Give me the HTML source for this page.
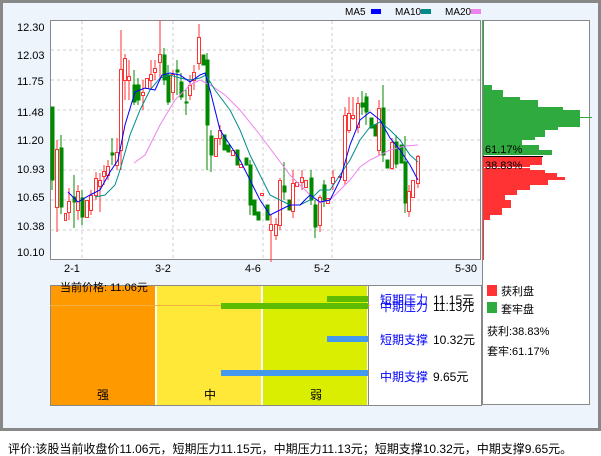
<!DOCTYPE html>
<html><head><meta charset="utf-8"><style>
html,body{margin:0;padding:0;background:#fff;width:601px;height:456px;overflow:hidden}
svg text{font-family:"Liberation Sans","Noto Sans CJK SC",sans-serif}
</style></head><body>
<svg width="601" height="456" xmlns="http://www.w3.org/2000/svg" font-size="11">
<rect x="1.5" y="1.5" width="598" height="428" fill="#EEF4FC" stroke="#888" stroke-width="3"/>
<!-- legend -->
<text x="345" y="15" font-size="10">MA5</text><rect x="371" y="9" width="10" height="5" fill="#00f"/>
<text x="395" y="15" font-size="10">MA10</text><rect x="421" y="9" width="10" height="5" fill="#008b8b"/>
<text x="445" y="15" font-size="10">MA20</text><rect x="471" y="9" width="10" height="5" fill="#ee82ee"/>
<!-- plot -->
<rect x="50.5" y="20.5" width="430" height="239" fill="#fff" stroke="#888"/>
<g stroke="#ccc" stroke-dasharray="3,3">
<line x1="51" y1="50" x2="480" y2="50"/><line x1="51" y1="80" x2="480" y2="80"/><line x1="51" y1="110" x2="480" y2="110"/><line x1="51" y1="140" x2="480" y2="140"/><line x1="51" y1="170" x2="480" y2="170"/><line x1="51" y1="200" x2="480" y2="200"/><line x1="51" y1="230" x2="480" y2="230"/>
<line x1="82" y1="21" x2="82" y2="260"/><line x1="173" y1="21" x2="173" y2="260"/><line x1="263" y1="21" x2="263" y2="260"/><line x1="332" y1="21" x2="332" y2="260"/>
</g>
<g font-size="11">
<text x="17" y="31">12.30</text><text x="17" y="59">12.03</text><text x="17" y="85">11.75</text><text x="17" y="116">11.48</text><text x="17" y="144">11.20</text><text x="17" y="173">10.93</text><text x="17" y="201">10.65</text><text x="17" y="230">10.38</text><text x="17" y="256">10.10</text>
<text x="64" y="272">2-1</text><text x="155" y="272">3-2</text><text x="245" y="272">4-6</text><text x="314" y="272">5-2</text><text x="455" y="272">5-30</text>
</g>
<g id="c">
<!-- candles: green filled -->
<g fill="#008800" stroke="#008800">
<line x1="52" y1="107" x2="52" y2="190"/><rect x="51" y="107" width="3" height="73"/>
<line x1="61" y1="135" x2="61" y2="214"/><rect x="60" y="148" width="3" height="59"/>
<line x1="74" y1="175" x2="74" y2="228"/><rect x="73" y="197" width="3" height="5"/>
<line x1="82" y1="190" x2="82" y2="225"/><rect x="81" y="198" width="3" height="19"/>
<line x1="112" y1="138" x2="112" y2="165"/><rect x="111" y="153" width="3" height="2"/>
<line x1="134" y1="70" x2="134" y2="105"/><rect x="133" y="85" width="3" height="17"/>
<line x1="138" y1="78" x2="138" y2="105"/><rect x="137" y="85" width="3" height="15"/>
<line x1="164" y1="48" x2="164" y2="85"/><rect x="163" y="55" width="3" height="25"/>
<line x1="168" y1="65" x2="168" y2="105"/><rect x="167" y="75" width="3" height="27"/>
<line x1="177" y1="60" x2="177" y2="95"/><rect x="176" y="70" width="3" height="2"/>
<line x1="181" y1="73" x2="181" y2="100"/><rect x="180" y="82" width="3" height="15"/>
<line x1="186" y1="90" x2="186" y2="115"/><rect x="185" y="102" width="3" height="1"/>
<rect x="202" y="55" width="3" height="10"/>
<line x1="207" y1="53" x2="207" y2="170"/><rect x="206" y="60" width="3" height="65"/>
<line x1="211" y1="130" x2="211" y2="172"/><rect x="210" y="136" width="3" height="19"/>
<rect x="223" y="135" width="3" height="15"/><rect x="227" y="145" width="3" height="7"/>
<rect x="236" y="150" width="3" height="15"/><rect x="245" y="158" width="3" height="7"/>
<line x1="250" y1="160" x2="250" y2="215"/><rect x="249" y="165" width="3" height="40"/>
<rect x="253" y="200" width="3" height="15"/><rect x="257" y="212" width="3" height="8"/>
<rect x="266" y="205" width="3" height="15"/>
<line x1="284" y1="162" x2="284" y2="200"/><rect x="283" y="186" width="3" height="6"/>
<rect x="288" y="200" width="3" height="10"/>
<line x1="311" y1="170" x2="311" y2="205"/><rect x="310" y="178" width="3" height="22"/>
<line x1="315" y1="200" x2="315" y2="238"/><rect x="314" y="205" width="3" height="22"/>
<line x1="324" y1="180" x2="324" y2="207"/><rect x="323" y="185" width="3" height="15"/>
<line x1="362" y1="91" x2="362" y2="115"/><rect x="361" y="103" width="3" height="4"/>
<line x1="366" y1="93" x2="366" y2="125"/><rect x="365" y="97" width="3" height="15"/>
<rect x="370" y="118" width="3" height="10"/><rect x="374" y="125" width="3" height="11"/>
<line x1="383" y1="85" x2="383" y2="162"/><rect x="382" y="108" width="3" height="47"/>
<rect x="386" y="160" width="3" height="8"/>
<line x1="396" y1="135" x2="396" y2="168"/><rect x="395" y="142" width="3" height="22"/>
<rect x="400" y="145" width="3" height="18"/>
<line x1="405" y1="136" x2="405" y2="213"/><rect x="404" y="162" width="3" height="41"/>
</g>
<!-- red hollow -->
<g fill="none" stroke="#ff3333">
<line x1="57" y1="140" x2="57" y2="232"/><rect x="55.5" y="149.5" width="3" height="58" fill="#fff"/>
<rect x="64.5" y="213.5" width="2" height="7"/>
<line x1="69" y1="188" x2="69" y2="220"/><rect x="67.5" y="201.5" width="3" height="11" fill="#fff"/>
<line x1="78" y1="185" x2="78" y2="220"/><rect x="76.5" y="191.5" width="3" height="19" fill="#fff"/>
<rect x="85.5" y="200.5" width="3" height="17"/>
<line x1="91" y1="190" x2="91" y2="215"/><rect x="89.5" y="195.5" width="3" height="15" fill="#fff"/>
<line x1="96" y1="172" x2="96" y2="200"/><rect x="94.5" y="178.5" width="3" height="17" fill="#fff"/>
<line x1="100" y1="173" x2="100" y2="212"/><rect x="98.5" y="180.5" width="3" height="6" fill="#fff"/>
<line x1="104" y1="165" x2="104" y2="185"/><rect x="102.5" y="171.5" width="3" height="5" fill="#fff"/>
<line x1="108" y1="160" x2="108" y2="180"/><rect x="106.5" y="166.5" width="3" height="9" fill="#fff"/>
<line x1="117" y1="138" x2="117" y2="170"/><rect x="115.5" y="152.5" width="3" height="13" fill="#fff"/>
<line x1="121" y1="30" x2="121" y2="170"/><rect x="119.5" y="69.5" width="3" height="81" fill="#fff"/>
<line x1="125" y1="54" x2="125" y2="100"/><rect x="123.5" y="58.5" width="3" height="22" fill="#fff"/>
<line x1="129" y1="60" x2="129" y2="100"/><rect x="127.5" y="76.5" width="3" height="4" fill="#fff"/>
<line x1="143" y1="80" x2="143" y2="110"/><rect x="141.5" y="92.5" width="3" height="3" fill="#fff"/>
<rect x="145.5" y="78.5" width="3" height="10"/>
<line x1="151" y1="60" x2="151" y2="90"/><rect x="149.5" y="74.5" width="3" height="6" fill="#fff"/>
<line x1="155" y1="60" x2="155" y2="80"/><rect x="153.5" y="68.5" width="3" height="4" fill="#fff"/>
<line x1="160" y1="20" x2="160" y2="80"/><rect x="158.5" y="54.5" width="3" height="8" fill="#fff"/>
<line x1="173" y1="70" x2="173" y2="100"/><rect x="171.5" y="74.5" width="3" height="18" fill="#fff"/>
<line x1="190" y1="75" x2="190" y2="100"/><rect x="188.5" y="85.5" width="3" height="10" fill="#fff"/>
<line x1="194" y1="65" x2="194" y2="90"/><rect x="192.5" y="72.5" width="3" height="8" fill="#fff"/>
<line x1="199" y1="24" x2="199" y2="70"/><rect x="197.5" y="37.5" width="3" height="26" fill="#fff"/>
<rect x="214.5" y="138.5" width="3" height="18"/>
<line x1="220" y1="125" x2="220" y2="145"/><rect x="218.5" y="130.5" width="3" height="8" fill="#fff"/>
<rect x="231.5" y="150.5" width="3" height="5"/>
<rect x="239.5" y="164.5" width="3" height="3"/>
<rect x="260.5" y="193.5" width="3" height="2"/>
<line x1="271" y1="215" x2="271" y2="262"/><rect x="269.5" y="224.5" width="3" height="6" fill="#fff"/>
<line x1="276" y1="218" x2="276" y2="240"/><rect x="274.5" y="224.5" width="3" height="11" fill="#fff"/>
<line x1="280" y1="178" x2="280" y2="230"/><rect x="278.5" y="180.5" width="3" height="45" fill="#fff"/>
<line x1="293" y1="170" x2="293" y2="218"/><rect x="291.5" y="183.5" width="3" height="28" fill="#fff"/>
<rect x="295.5" y="182.5" width="3" height="4"/>
<line x1="302" y1="170" x2="302" y2="190"/><rect x="300.5" y="177.5" width="3" height="5" fill="#fff"/>
<rect x="304.5" y="180.5" width="3" height="7"/>
<line x1="320" y1="195" x2="320" y2="232"/><rect x="318.5" y="197.5" width="3" height="28" fill="#fff"/>
<rect x="326.5" y="198.5" width="3" height="5"/>
<line x1="333" y1="170" x2="333" y2="190"/><rect x="331.5" y="177.5" width="3" height="6" fill="#fff"/>
<rect x="338.5" y="176.5" width="3" height="1"/>
<line x1="345" y1="107" x2="345" y2="185"/><rect x="343.5" y="115.5" width="3" height="65" fill="#fff"/>
<line x1="349" y1="97" x2="349" y2="133"/><rect x="347.5" y="113.5" width="3" height="17" fill="#fff"/>
<line x1="353" y1="97" x2="353" y2="120"/><rect x="351.5" y="115.5" width="3" height="3" fill="#fff"/>
<line x1="358" y1="97" x2="358" y2="133"/><rect x="356.5" y="103.5" width="3" height="24" fill="#fff"/>
<line x1="379" y1="100" x2="379" y2="155"/><rect x="377.5" y="108.5" width="3" height="42" fill="#fff"/>
<line x1="392" y1="138" x2="392" y2="170"/><rect x="390.5" y="142.5" width="3" height="26" fill="#fff"/>
<line x1="409" y1="185" x2="409" y2="217"/><rect x="407.5" y="191.5" width="3" height="20" fill="#fff"/>
<rect x="411.5" y="180.5" width="3" height="17"/>
<line x1="418" y1="155" x2="418" y2="188"/><rect x="416.5" y="156.5" width="3" height="27" fill="#fff"/>
</g>
</g>
<g fill="none" stroke-width="1">
<polyline stroke="#ee82ee" points="134,163 145,155 160,125 175,100 190,85 200,80 212,86 225,95 240,110 260,135 275,155 290,175 300,185 310,195 320,203 330,200 340,190 350,180 360,167 370,160 380,155 390,150 405,146 418,145"/>
<polyline stroke="#008b8b" points="95,197 105,195 115,185 120,170 130,135 140,110 150,90 160,78 170,75 180,78 190,80 200,78 206,75 215,90 230,110 240,130 250,155 260,175 270,195 280,200 290,205 300,205 310,200 320,190 330,190 340,175 350,160 360,140 370,127 380,122 390,130 400,140 410,155 418,162"/>
<polyline stroke="#0000ff" points="68,192 78,202 90,195 100,190 110,172 118,160 125,125 135,92 145,88 155,90 162,75 170,73 180,75 190,82 200,75 205,73 210,90 220,130 230,145 240,160 250,180 260,200 270,215 280,210 290,205 300,205 310,195 320,202 330,200 340,180 350,145 360,120 370,112 380,120 390,138 400,150 410,165 418,180"/>
</g>
<!-- right panel -->
<rect x="482.5" y="20.5" width="107" height="384" fill="#fff" stroke="#888"/>
<line x1="483.5" y1="20" x2="483.5" y2="156" stroke="#2ea83a"/>
<line x1="483.5" y1="156" x2="483.5" y2="260" stroke="#ff3333"/>
<g fill="#2eaa3e">
<rect x="483" y="85" width="9" height="5"/><rect x="483" y="90" width="20" height="7"/><rect x="483" y="97" width="37" height="3"/><rect x="483" y="100" width="55" height="7"/><rect x="483" y="107" width="80" height="3"/><rect x="483" y="110" width="97" height="17"/><rect x="560" y="117" width="32" height="1"/><rect x="483" y="127" width="75" height="3"/><rect x="483" y="130" width="62" height="7"/><rect x="483" y="137" width="52" height="3"/><rect x="483" y="140" width="39" height="5"/><rect x="483" y="145" width="56" height="5"/><rect x="483" y="150" width="69" height="5"/>
</g>
<line x1="483" y1="156.5" x2="543" y2="156.5" stroke="#000"/>
<g fill="#ff3333">
<rect x="483" y="157" width="59" height="8"/><rect x="483" y="165" width="47" height="2"/><rect x="483" y="168" width="47" height="2"/><rect x="483" y="170" width="62" height="3"/><rect x="483" y="173" width="74" height="4"/><rect x="483" y="177" width="82" height="3"/><rect x="483" y="180" width="65" height="5"/><rect x="483" y="185" width="47" height="5"/><rect x="483" y="190" width="34" height="5"/><rect x="483" y="195" width="22" height="5"/><rect x="483" y="200" width="28" height="8"/><rect x="483" y="208" width="19" height="7"/><rect x="483" y="215" width="7" height="5"/>
</g>
<text x="485" y="153" font-size="11">61.17%</text>
<text x="485" y="169" font-size="11">38.83%</text>
<rect x="487" y="285" width="10" height="11" fill="#ff3333"/><text x="501" y="295" font-size="11">获利盘</text>
<rect x="487" y="302" width="10" height="11" fill="#2eaa3e"/><text x="501" y="313" font-size="11">套牢盘</text>
<text x="487" y="335" font-size="11">获利:38.83%</text>
<text x="487" y="355" font-size="11">套牢:61.17%</text>
<!-- bottom -->
<rect x="50.5" y="285.5" width="431" height="120" fill="#fff" stroke="#888"/>
<rect x="51" y="286" width="104" height="119" fill="#ff9900"/>
<rect x="157" y="286" width="104" height="119" fill="#ffe838"/>
<rect x="263" y="286" width="104" height="119" fill="#d9ee00"/>
<line x1="368.5" y1="286" x2="368.5" y2="405" stroke="#888"/>
<line x1="50" y1="305.5" x2="370" y2="305.5" stroke="#f5b041"/>
<rect x="327" y="296" width="41" height="6" fill="#5dbb00"/>
<rect x="221" y="303" width="147" height="6" fill="#5dbb00"/>
<rect x="327" y="336" width="41" height="6" fill="#4499ee"/>
<rect x="221" y="370" width="147" height="6" fill="#4499ee"/>
<text x="60" y="291" font-size="11">当前价格: 11.06元</text>
<text x="97" y="399" font-size="12">强</text><text x="204" y="399" font-size="12">中</text><text x="310" y="399" font-size="12">弱</text>
<g font-size="12"><text x="380" y="304" fill="#0000ff">短期压力</text><text x="433" y="304">11.15元</text>
<text x="380" y="311" fill="#0000ff">中期压力</text><text x="433" y="311">11.13元</text>
<text x="380" y="344" fill="#0000ff">短期支撑</text><text x="433" y="344">10.32元</text>
<text x="380" y="381" fill="#0000ff">中期支撑</text><text x="433" y="381">9.65元</text></g>
<text x="8" y="453" font-size="12">评价:该股当前收盘价11.06元，短期压力11.15元，中期压力11.13元；短期支撑10.32元，中期支撑9.65元。</text>
</svg>
</body></html>
